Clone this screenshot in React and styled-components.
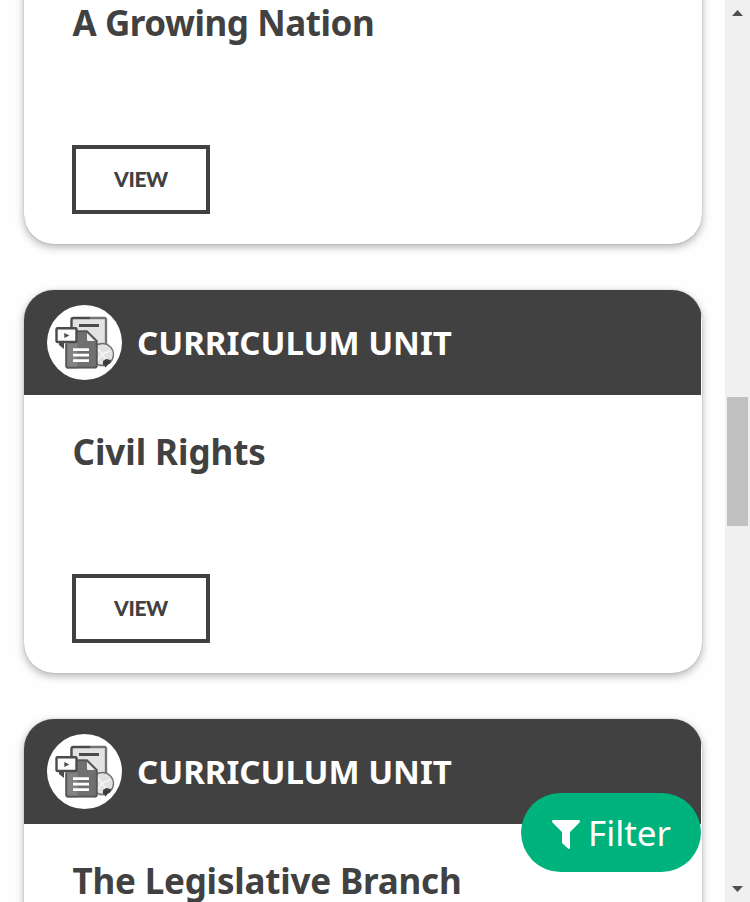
import React from 'react';
import styled, { createGlobalStyle } from 'styled-components';

const GlobalStyle = createGlobalStyle`
  * { box-sizing: border-box; }
  body { margin: 0; background: #fefefe; overflow: hidden; }
`;

const Page = styled.div`
  display: flex;
  width: 750px;
  height: 902px;
  overflow: hidden;
  font-family: 'Noto Sans', sans-serif;
  color: #414141;
`;

const Content = styled.main`
  flex: 1;
  height: 902px;
  overflow: hidden;
  background: #fefefe;
`;

const CardList = styled.div`
  display: flex;
  flex-direction: column;
  gap: 46px;
  margin: -139px 23px 0 24px;
`;

const Card = styled.article`
  flex: none;
  height: 383px;
  border-radius: 30px;
  overflow: hidden;
  background: #fff;
  box-shadow: 0 3px 9px rgba(0, 0, 0, 0.3), 0 0 1px rgba(0, 0, 0, 0.4);
`;

const CardHeader = styled.header`
  display: flex;
  align-items: center;
  gap: 15px;
  height: 105px;
  margin-right: 1px;
  padding-left: 23px;
  background: #414141;
`;

const CardKind = styled.span`
  font-size: 33px;
  font-weight: 700;
  line-height: 46px;
  color: #fff;
  white-space: nowrap;
`;

const CardBody = styled.div`
  display: flex;
  flex-direction: column;
  align-items: flex-start;
  height: 278px;
  padding: 33px 48px 30px;
`;

const Title = styled.h2`
  margin: 0 0 0 0.5px;
  font-size: 35px;
  font-weight: 700;
  line-height: 48px;
  letter-spacing: ${(p) => p.$tracking};
  white-space: nowrap;
`;

const ViewButton = styled.button`
  margin-top: auto;
  width: 138px;
  height: 69px;
  padding: 0 0 1px;
  border: 4px solid #414141;
  background: #fff;
  color: #414141;
  font: 900 21px/28px Lato, sans-serif;
  letter-spacing: -0.4px;
`;

const FilterButton = styled.button`
  position: fixed;
  left: 521px;
  top: 793px;
  display: flex;
  align-items: center;
  gap: 8px;
  width: 180px;
  height: 79px;
  padding: 0 0 0 31px;
  border: 0;
  border-radius: 40px;
  background: #00b37d;
  color: #fff;
  font: 400 35px/48px 'Noto Sans', sans-serif;
`;

const Funnel = styled.svg`
  flex: none;
  width: 28px;
  height: 29px;
  margin-top: 4px;
`;

const Scrollbar = styled.div`
  display: flex;
  flex-direction: column;
  align-items: center;
  width: 25px;
  height: 902px;
  background: #f0f0f0;
`;

const Arrow = styled.svg`
  flex: none;
  width: 11px;
  height: 6px;
  margin: ${(p) => p.$margin};
`;

const Thumb = styled.div`
  width: 21px;
  height: 129px;
  margin: 381px 2px 0;
  background: #c1c1c1;
  align-self: flex-start;
`;

const Badge = styled.svg`
  flex: none;
  width: 75px;
  height: 75px;
`;

function UnitBadge() {
  return (
    <Badge viewBox="0 0 75 75">
      <circle cx="37.5" cy="37.5" r="37.5" fill="#fff" />
      <rect x="24.5" y="13" width="34" height="49" rx="2" fill="#e3e3e3" />
      <path d="M24.5 24V15a2 2 0 0 1 2-2H43" fill="none" stroke="#4b4b4b" strokeWidth="2.4" />
      <path d="M43 13h14.5a1.5 1.5 0 0 1 1.5 2v36" fill="none" stroke="#747474" strokeWidth="2.4" />
      <path d="M32 20.5h20" stroke="#4a4a4a" strokeWidth="3.2" />
      <circle cx="55.5" cy="49.5" r="11" fill="#e1e1e1" stroke="#707070" strokeWidth="1.3" />
      <path d="m50 43 5 6 8-3M50 56l5-7 6 9" fill="none" stroke="#f5f5f5" strokeWidth="1.5" />
      <path d="m56 56 3-2 5 1-1 4-2-1-2 3-3-1z" fill="#424242" />
      <path d="m56 59 5-2m-3 5 4-5" stroke="#383838" strokeWidth="1.3" />
      <path d="M18.5 25.5h22l10 10v26a2 2 0 0 1-2 2H20.5a2 2 0 0 1-2-2z" fill="#707070" />
      <path d="M18.5 25.5h12v38h-10a2 2 0 0 1-2-2z" fill="#828282" />
      <path d="M19.3 39v21.5a2 2 0 0 0 2 2h26.4a2 2 0 0 0 2-2V36L40 26.3H29" fill="none" stroke="#555" strokeWidth="1.7" />
      <path d="M40 28v6.5a1.5 1.5 0 0 0 1.5 1.5H48z" fill="#eee" />
      <path d="M26 44.7h16M26 50.2h16M26 55.7h16" stroke="#fff" strokeWidth="2.7" />
      <path d="M12 37v3l5 4v-7z" fill="#4b4b4b" />
      <rect x="9.5" y="23.2" width="20" height="13.8" rx="1" fill="#fafafa" stroke="#4b4b4b" strokeWidth="2.4" />
      <path d="m17.3 28 5 2.5-5 2.5z" fill="#4a4a4a" />
    </Badge>
  );
}

const units = [
  { title: 'A Growing Nation', tracking: '-0.45px' },
  { title: 'Civil Rights', tracking: '-0.05px' },
  { title: 'The Legislative Branch', tracking: '-0.2px' },
];

export default function App() {
  return (
    <Page>
      <GlobalStyle />
      <Content>
        <CardList>
          {units.map((unit) => (
            <Card key={unit.title}>
              <CardHeader>
                <UnitBadge />
                <CardKind>CURRICULUM UNIT</CardKind>
              </CardHeader>
              <CardBody>
                <Title $tracking={unit.tracking}>{unit.title}</Title>
                <ViewButton>VIEW</ViewButton>
              </CardBody>
            </Card>
          ))}
        </CardList>
      </Content>
      <Scrollbar>
        <Arrow $margin="10px 0 0" viewBox="0 0 11 6"><path d="M0 6 5.5 0 11 6z" fill="#505050" /></Arrow>
        <Thumb />
        <Arrow $margin="auto 0 10px" viewBox="0 0 11 6"><path d="m0 0 5.5 6L11 0z" fill="#505050" /></Arrow>
      </Scrollbar>
      <FilterButton>
        <Funnel viewBox="0 0 28 29"><path d="M0 1q0-1 1-1h26q1 0 1 1l-.5 1.5L18 12v16q-.5 1-1.5 1L10 23V12L.5 2.5Z" fill="#fff" /></Funnel>
        Filter
      </FilterButton>
    </Page>
  );
}
